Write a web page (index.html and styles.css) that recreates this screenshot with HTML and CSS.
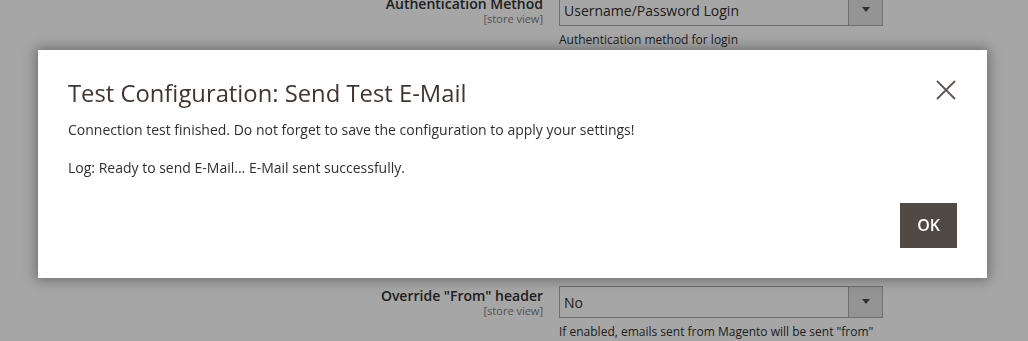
FILE: index.html
```html
<!DOCTYPE html>
<html lang="en">
<head>
<meta charset="UTF-8">
<meta name="viewport" content="width=device-width, initial-scale=1.0">
<title>SMTP Configuration</title>
<link rel="stylesheet" href="styles.css">
</head>
<body>
<div class="page">
  <div class="config">
    <div class="field">
      <div class="label"><span class="label-text">Authentication Method</span><span class="scope">[store view]</span></div>
      <div class="control">
        <div class="select"><span class="select-value">Username/Password Login</span><span class="select-btn"></span></div>
        <div class="note">Authentication method for login</div>
      </div>
    </div>
    <div class="field">
      <div class="label"><span class="label-text">Username</span><span class="scope">[store view]</span></div>
      <div class="control">
        <div class="select"><span class="select-value"></span></div>
      </div>
    </div>
    <div class="field">
      <div class="label"><span class="label-text">Password</span><span class="scope">[store view]</span></div>
      <div class="control">
        <div class="select"><span class="select-value"></span></div>
      </div>
    </div>
    <div class="field">
      <div class="label"><span class="label-text">Send Test E-Mail To</span><span class="scope">[store view]</span></div>
      <div class="control">
        <div class="select"><span class="select-value"></span></div>
        <div class="note">Test e-mail recipient</div>
      </div>
    </div>
    <div class="field">
      <div class="label"><span class="label-text">Override "From" header</span><span class="scope">[store view]</span></div>
      <div class="control">
        <div class="select"><span class="select-value">No</span><span class="select-btn"></span></div>
        <div class="note">If enabled, emails sent from Magento will be sent "from"</div>
      </div>
    </div>
  </div>
  <div class="footer"></div>
</div>

<div class="overlay"></div>

<div class="modal">
  <div class="modal-header">
    <h1 class="modal-title">Test Configuration: Send Test E-Mail</h1>
    <button class="modal-close" aria-label="Close">
      <svg width="20" height="20" viewBox="0 0 20 20"><path d="M1 1 L19 19 M19 1 L1 19" stroke="#5f5752" stroke-width="1.8" fill="none"/></svg>
    </button>
  </div>
  <div class="modal-content">
    <p>Connection test finished. Do not forget to save the configuration to apply your settings!</p>
    <p class="log">Log: Ready to send E-Mail... E-Mail sent successfully.</p>
  </div>
  <div class="modal-footer">
    <button class="action-primary">OK</button>
  </div>
</div>
</body>
</html>
```

FILE: styles.css
```css
body {
  margin: 0;
  background: #fff;
  font-family: "Open Sans", "Liberation Sans", sans-serif;
  color: #303030;
  overflow: hidden;
}

/* page behind the popup */
.config {
  display: flex;
  flex-direction: column;
  gap: 30px;
  margin-top: -6px;
  padding-bottom: 4px;
}
.field {
  display: grid;
  grid-template-columns: 543px 324px;
  column-gap: 16px;
}
.label {
  display: flex;
  flex-direction: column;
  align-items: flex-end;
  text-align: right;
}
.label-text {
  font-size: 14px;
  font-weight: 600;
  line-height: 20px;
}
.scope {
  font-size: 11px;
  line-height: 13px;
  color: #808080;
  margin-top: -2px;
}
.select {
  display: flex;
  height: 32px;
  box-sizing: border-box;
  border: 1px solid #adadad;
  background: #fff;
}
.select-value {
  flex: 1;
  font-size: 14px;
  line-height: 30px;
  padding-left: 4px;
  padding-top: 1px;
}
.select-btn {
  width: 33px;
  border-left: 1px solid #adadad;
  background: #e3e3e3;
  display: flex;
  align-items: center;
  justify-content: center;
}
.select-btn::after {
  content: "";
  border-top: 5px solid #514943;
  border-left: 4px solid transparent;
  border-right: 4px solid transparent;
  margin-top: -2px;
}
.note {
  font-size: 12px;
  line-height: 16px;
  margin-top: 6px;
}
.footer {
  height: 40px;
  background: #373330;
}

.overlay {
  position: fixed;
  inset: 0;
  background: rgba(0, 0, 0, 0.35);
}

/* popup */
.modal {
  position: fixed;
  top: 50px;
  left: 38px;
  right: 41px;
  background: #fff;
  box-shadow: 0 0 12px 2px rgba(0, 0, 0, 0.35);
  padding: 28px 30px 30px;
}
.modal-header {
  display: flex;
  justify-content: space-between;
}
.modal-title {
  margin: 0;
  font-size: 23.8px;
  font-weight: 400;
  line-height: 31px;
  color: #41362f;
}
.modal-close {
  border: 0;
  background: none;
  padding: 0;
  width: 20px;
  height: 20px;
  margin-top: 2px;
  margin-right: 1px;
  cursor: pointer;
}
.modal-close svg {
  display: block;
}
.modal-content p {
  margin: 11px 0 0;
  font-size: 14px;
  line-height: 20px;
}
.modal-content p.log {
  margin-top: 18px;
}
.modal-footer {
  display: flex;
  justify-content: flex-end;
  margin-top: 25px;
}
.action-primary {
  font-family: "Open Sans", "Liberation Sans", sans-serif;
  background: #514943;
  color: #fff;
  border: 0;
  font-size: 16px;
  font-weight: 600;
  line-height: 21px;
  padding: 12px 17px;
  cursor: pointer;
}
```
